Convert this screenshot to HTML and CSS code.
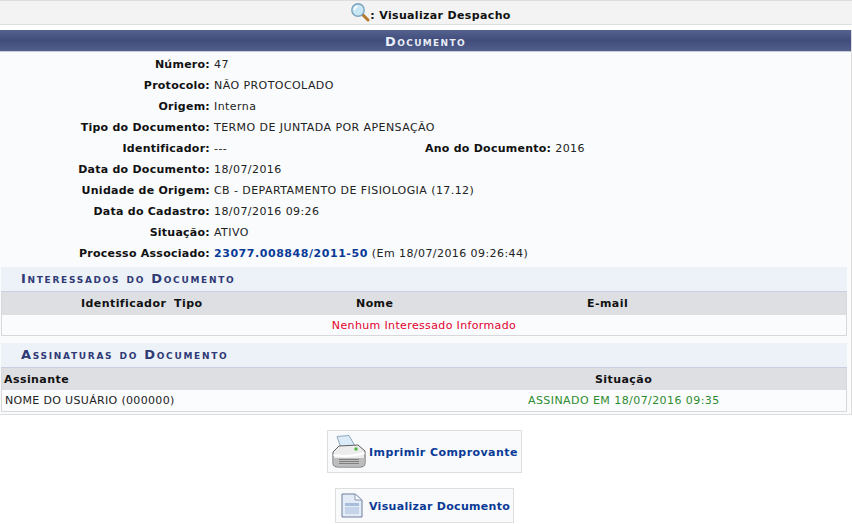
FILE: index.html
```html
<!DOCTYPE html>
<html lang="pt-BR">
<head>
<meta charset="utf-8">
<title>Visualizar Despacho</title>
<link rel="stylesheet" href="styles.css">
</head>
<body>
<h2 class="page-title">
  <svg class="title-icon" width="20" height="20" viewBox="0 0 20 20">
    <path d="M12.5 12.5 L18 18" stroke="#b5792e" stroke-width="3" stroke-linecap="round"/>
    <circle cx="8" cy="8" r="6.2" fill="#c9e6f5" stroke="#7ba3bd" stroke-width="1.4"/>
    <path d="M4.5 8 A3.5 3.5 0 0 1 8 4.5" fill="none" stroke="#fff" stroke-width="1.6"/>
  </svg><span>: Visualizar Despacho</span>
</h2>
<section class="panel">
  <h3 class="panel-title">Documento</h3>
  <div class="fields">
    <div class="row"><b class="label">Número:</b><span>47</span></div>
    <div class="row"><b class="label">Protocolo:</b><span>NÃO PROTOCOLADO</span></div>
    <div class="row"><b class="label">Origem:</b><span>Interna</span></div>
    <div class="row"><b class="label">Tipo do Documento:</b><span>TERMO DE JUNTADA POR APENSAÇÃO</span></div>
    <div class="row"><b class="label">Identificador:</b><span class="half">---</span><b class="label-2">Ano do Documento:</b><span>2016</span></div>
    <div class="row"><b class="label">Data do Documento:</b><span>18/07/2016</span></div>
    <div class="row"><b class="label">Unidade de Origem:</b><span>CB - DEPARTAMENTO DE FISIOLOGIA (17.12)</span></div>
    <div class="row"><b class="label">Data do Cadastro:</b><span>18/07/2016 09:26</span></div>
    <div class="row"><b class="label">Situação:</b><span>ATIVO</span></div>
    <div class="row"><b class="label">Processo Associado:</b><span><a class="link" href="#">23077.008848/2011-50</a> (Em 18/07/2016 09:26:44)</span></div>
  </div>

  <h4 class="sub-title">Interessados do Documento</h4>
  <div class="list-box">
    <div class="thead thead-a">
      <b class="c-id">Identificador</b><b class="c-tipo">Tipo</b><b class="c-nome">Nome</b><b class="c-mail">E-mail</b>
    </div>
    <div class="empty">Nenhum Interessado Informado</div>
  </div>

  <h4 class="sub-title second">Assinaturas do Documento</h4>
  <div class="list-box">
    <div class="thead thead-b">
      <b>Assinante</b><b class="c-sit">Situação</b>
    </div>
    <div class="sign-row">
      <span>NOME DO USUÁRIO (000000)</span><span class="signed">ASSINADO EM 18/07/2016 09:35</span>
    </div>
  </div>
</section>

<div class="actions">
  <a class="action print" href="#">
    <svg width="36" height="33" viewBox="0 0 36 33">
      <path d="M6 1.5 L18 0.5 L24 11 L10 13 Z" fill="#dcebf8" stroke="#8fa6bb"/>
      <path d="M8 11 L27 10 L34 16 L34 28 Q34 32 29 32 L7 32 Q2 32 2 28 L2 17 Z" fill="#ececec" stroke="#5f5f5f"/>
      <path d="M2.5 20 Q18 23 33.5 18" fill="none" stroke="#fff" stroke-width="2"/>
      <path d="M2.5 23 H33.5 V28 Q33.5 31.5 29 31.5 L7 31.5 Q2.5 31.5 2.5 28 Z" fill="#bdbdbd"/>
      <path d="M8 24.5 H28 M8 26.5 H28 M8 28.5 H28" stroke="#808080"/>
      <circle cx="25" cy="14" r="1.8" fill="#54b948"/>
    </svg>
    <span>Imprimir Comprovante</span>
  </a>
  <a class="action doc" href="#">
    <svg width="24" height="25" viewBox="0 0 24 25">
      <path d="M2 1 H15 L22 7 V24 H2 Z" fill="#e3ebf7" stroke="#6f7f9c"/>
      <path d="M15 1 V7 H22 Z" fill="#fff" stroke="#8a98b2"/>
      <rect x="5" y="10" width="14" height="3" fill="#a9bcdc"/>
      <rect x="5" y="14" width="14" height="7" fill="#c6d4ea"/>
    </svg>
    <span>Visualizar Documento</span>
  </a>
</div>
</body>
</html>
```
FILE: styles.css
```css
* { box-sizing: border-box; }
html, body { margin: 0; padding: 0; }
body {
  width: 852px;
  height: 524px;
  overflow: hidden;
  background: #fff;
  color: #222;
  font-family: "DejaVu Sans", Verdana, sans-serif;
  font-size: 11px;
  line-height: 13px;
  letter-spacing: .43px;
}
b { color: #111; }
.page-title {
  margin: 0 0 5px;
  height: 25px;
  display: flex;
  justify-content: center;
  align-items: center;
  background: #f3f3f3;
  border-top: 1px solid #dedede;
  border-bottom: 1px solid #dedede;
  font-size: 11px;
  font-weight: bold;
  color: #111;
  padding: 6px 0 0 9px;
  letter-spacing: .35px;
}
.title-icon { margin-top: -8px; }
.panel {
  background: #f9fbfd;
  border-bottom: 1px solid #dedede;
  border-right: 1px solid #dedede;
  height: 385px;
}
.panel-title {
  margin: 0;
  height: 22px;
  line-height: 24px;
  text-align: center;
  color: #e8edf7;
  font-size: 13px;
  font-weight: bold;
  font-variant: small-caps;
  letter-spacing: 1.35px;
  background: linear-gradient(#55628f, #404d7c 50%, #525f8c);
  border-bottom: 1px solid #c9ccd6;
}
.fields { padding-top: 2px; height: 215px; }
.row { display: flex; height: 21px; align-items: center; }
.label { width: 210px; text-align: right; margin-right: 4px; letter-spacing: .25px; }
.half { width: 211px; }
.label-2 { margin-right: 4px; letter-spacing: .25px; }
.link { color: #0a3a96; font-weight: bold; text-decoration: none; letter-spacing: .55px; }
.sub-title {
  margin: 0 4px 0 1px;
  height: 25px;
  line-height: 24px;
  padding-left: 20px;
  background: #edf1f8;
  color: #2f3a75;
  font-size: 13px;
  font-weight: bold;
  font-variant: small-caps;
  letter-spacing: 1.7px;
  border-bottom: 1px solid #c9d0e0;
}
.sub-title.second { margin-top: 7px; }
.list-box {
  margin: 0 4px 0 1px;
  border: 1px solid #d8d8dc;
  border-top: 0;
}
.thead {
  height: 23px;
  background: #dedfe3;
  display: flex;
  align-items: center;
}
.c-id { margin-left: 79px; width: 93px; }
.c-tipo { width: 182px; }
.c-nome { width: 231px; }
.empty {
  height: 20px;
  line-height: 21px;
  text-align: center;
  color: #e3002b;
  letter-spacing: .36px;
}
.thead-b { padding-left: 2px; height: 22px; }
.thead-b b:first-child { width: 591px; }
.sign-row {
  height: 21px;
  display: flex;
  align-items: center;
  padding-left: 3px;
  background: #fbfcfe;
}
.sign-row span:first-child { width: 523px; letter-spacing: .33px; }
.signed { color: #2e8b2e; }
.actions {
  display: flex;
  flex-direction: column;
  align-items: center;
  padding-top: 15px;
  gap: 15px;
  padding-right: 3px;
}
.action {
  display: flex;
  align-items: center;
  background: #f9fafc;
  border: 1px solid #dedede;
  color: #0a3a96;
  font-weight: bold;
  text-decoration: none;
}
.print { height: 43px; width: 195px; padding-left: 3px; gap: 2px; }
.doc { height: 35px; width: 179px; padding-left: 4px; gap: 5px; letter-spacing: .3px; }
.action span { margin-top: 2px; }
```
